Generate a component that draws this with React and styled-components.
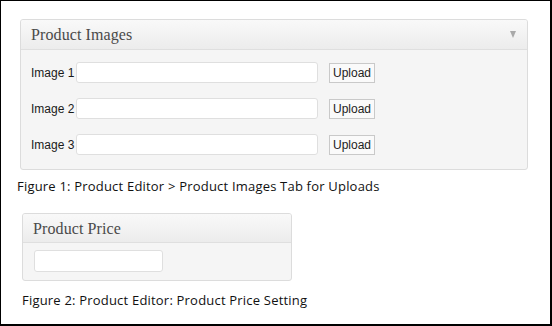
import React from 'react'
import styled, { createGlobalStyle } from 'styled-components';

const Global = createGlobalStyle`
  body{
    margin: 0;
    background: #fff;
  }
`

const rows = ['Image 1', 'Image 2', 'Image 3'];

const App = () => {
  return (
    <Frame>
      <Global />
      <Panel $width={508} $left={19} $top={18}>
        <Header $height={29} $pad={10}>
          <Title>Product Images</Title>
          <Arrow />
        </Header>
        <Body $pad="12px 10px 14px 10px">
          {rows.map((r) => (
            <Row key={r}>
              <Label>{r}</Label>
              <Input $width={242} />
              <Button>Upload</Button>
            </Row>
          ))}
        </Body>
      </Panel>
      <Caption $left={16} $top={8}>Figure 1: Product Editor &gt; Product Images Tab for Uploads</Caption>
      <Panel $width={270} $left={21} $top={19}>
        <Header $height={28} $pad={10}>
          <Title>Product Price</Title>
        </Header>
        <Body $pad="7px 11px 8px 11px">
          <Input $width={129} $height={22} />
        </Body>
      </Panel>
      <Caption $left={21} $top={11}>Figure 2: Product Editor: Product Price Setting</Caption>
    </Frame>
  )
}

export default App;

const Frame = styled.div`
  width: 552px;
  height: 326px;
  box-sizing: border-box;
  border: solid #000;
  border-width: 1px 2px 2px 1px;
  overflow: hidden;
  display: flex;
  flex-direction: column;
  align-items: flex-start;
`
const Panel = styled.div`
  width: ${p => p.$width}px;
  margin: ${p => p.$top}px 0 0 ${p => p.$left}px;
  box-sizing: border-box;
  border: 1px solid #dcdcdc;
  border-radius: 3px;
  background: #f5f5f5;
  overflow: hidden;
`
const Header = styled.div`
  height: ${p => p.$height}px;
  display: flex;
  align-items: center;
  justify-content: space-between;
  padding: 0 ${p => p.$pad}px;
  border-bottom: 1px solid #dfdfdf;
  background: linear-gradient(180deg, #f9f9f9 0%, #ececec 100%);
`
const Title = styled.span`
  font-family: "Liberation Serif", serif;
  font-size: 16px;
  letter-spacing: 0.1px;
  color: #4a4a4a;
  padding-top: 1px;
`
const Arrow = styled.span`
  width: 0;
  height: 0;
  margin-right: 1px;
  border-left: 3px solid transparent;
  border-right: 3px solid transparent;
  border-top: 7px solid #a9a9a9;
`
const Body = styled.div`
  padding: ${p => p.$pad};
  display: flex;
  flex-direction: column;
  gap: 15px;
`
const Row = styled.div`
  display: flex;
  align-items: center;
  height: 21px;
`
const Label = styled.label`
  width: 45px;
  font-family: "Liberation Sans", Arial, sans-serif;
  font-size: 12px;
  color: #1a1a1a;
`
const Input = styled.div`
  width: ${p => p.$width}px;
  height: ${p => p.$height || 21}px;
  box-sizing: border-box;
  background: #fff;
  border: 1px solid #dfdfdf;
  border-radius: 3px;
`
const Button = styled.div`
  margin-left: 11px;
  width: 46px;
  height: 20px;
  box-sizing: border-box;
  border: 1px solid #c9c9c9;
  background: #fafafa;
  display: flex;
  align-items: center;
  justify-content: center;
  font-family: "Liberation Sans", Arial, sans-serif;
  font-size: 12px;
  color: #222;
`
const Caption = styled.p`
  margin: ${p => p.$top}px 0 0 ${p => p.$left}px;
  font-family: "Open Sans", sans-serif;
  font-size: 13px;
  letter-spacing: 0.2px;
  line-height: 16px;
  color: #111;
`
